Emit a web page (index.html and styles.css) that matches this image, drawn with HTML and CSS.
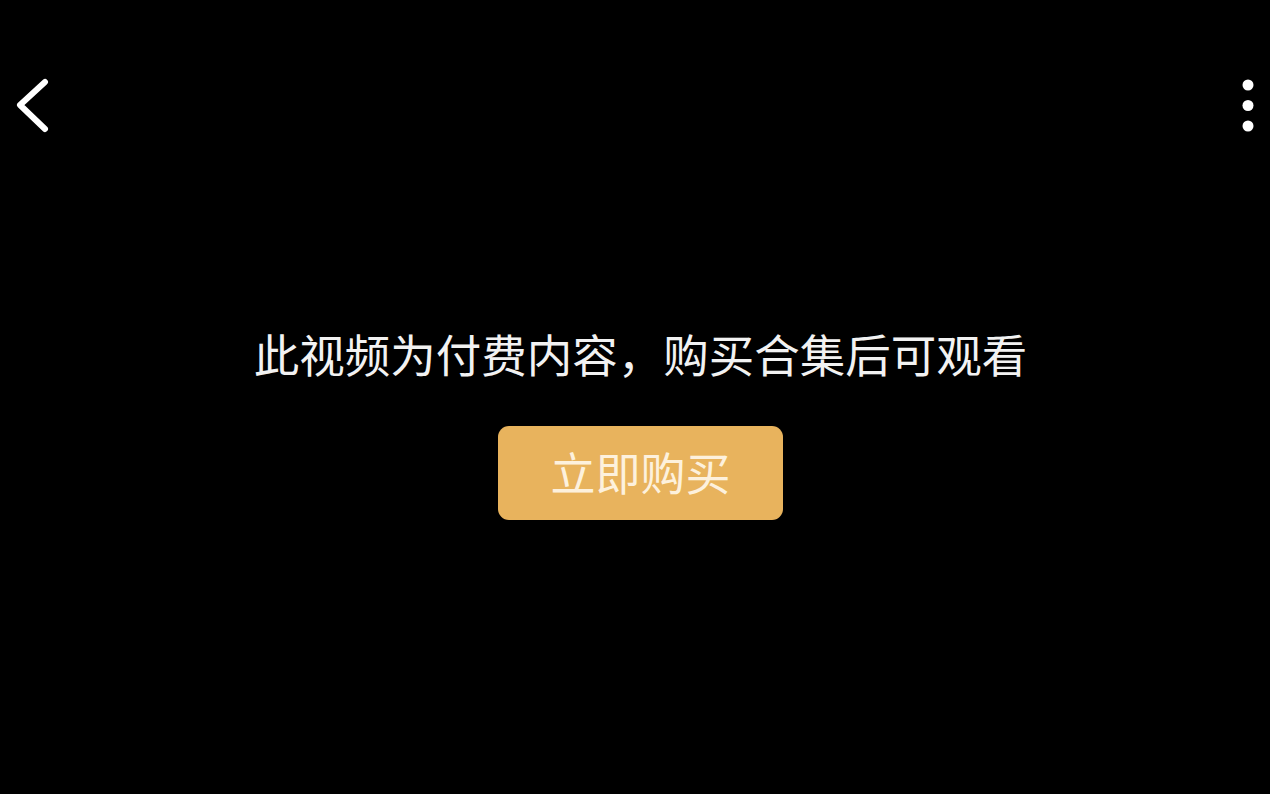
FILE: index.html
```html
<!DOCTYPE html>
<html lang="zh">
<head>
<meta charset="utf-8">
<link rel="stylesheet" href="styles.css">
</head>
<body>
<div class="page">
  <header class="topbar">
    <svg class="back" width="40" height="56" viewBox="0 0 40 56" aria-hidden="true">
      <path d="M33 4 L8 27 L33 51" fill="none" stroke="#fff" stroke-width="6" stroke-linecap="round" stroke-linejoin="round"/>
    </svg>
    <svg class="more" width="16" height="56" viewBox="0 0 16 56" aria-hidden="true">
      <circle cx="8" cy="7" r="5.5" fill="#fff"/>
      <circle cx="8" cy="27.5" r="5.5" fill="#fff"/>
      <circle cx="8" cy="48" r="5.5" fill="#fff"/>
    </svg>
  </header>
  <main class="content">
    <p class="message">此视频为付费内容，购买合集后可观看</p>
    <button class="buy">立即购买</button>
  </main>
</div>
</body>
</html>
```

FILE: styles.css
```css
html, body {
  margin: 0;
  padding: 0;
  background: #000;
}
.page {
  width: 1270px;
  height: 794px;
  display: flex;
  flex-direction: column;
  background: #000;
  font-family: "Noto Sans CJK SC", "Noto Sans", sans-serif;
}
.topbar {
  height: 212px;
  display: flex;
  align-items: center;
  justify-content: space-between;
  padding: 0 14px 0 12px;
}
.back, .more {
  display: block;
}
.content {
  display: flex;
  flex-direction: column;
  align-items: center;
  padding: 114px 0 0 11px;
}
.message {
  margin: 0;
  color: #f2f2f2;
  font-size: 45.5px;
  line-height: 54px;
  font-weight: 400;
  letter-spacing: 0;
}
.buy {
  margin-top: 46px;
  width: 285px;
  height: 94px;
  border: none;
  border-radius: 11px;
  background: #e8b35d;
  color: #fdf1dd;
  font-family: "Noto Sans CJK SC", "Noto Sans", sans-serif;
  font-size: 45px;
  line-height: 1;
  padding: 0 0 4px;
}
```
